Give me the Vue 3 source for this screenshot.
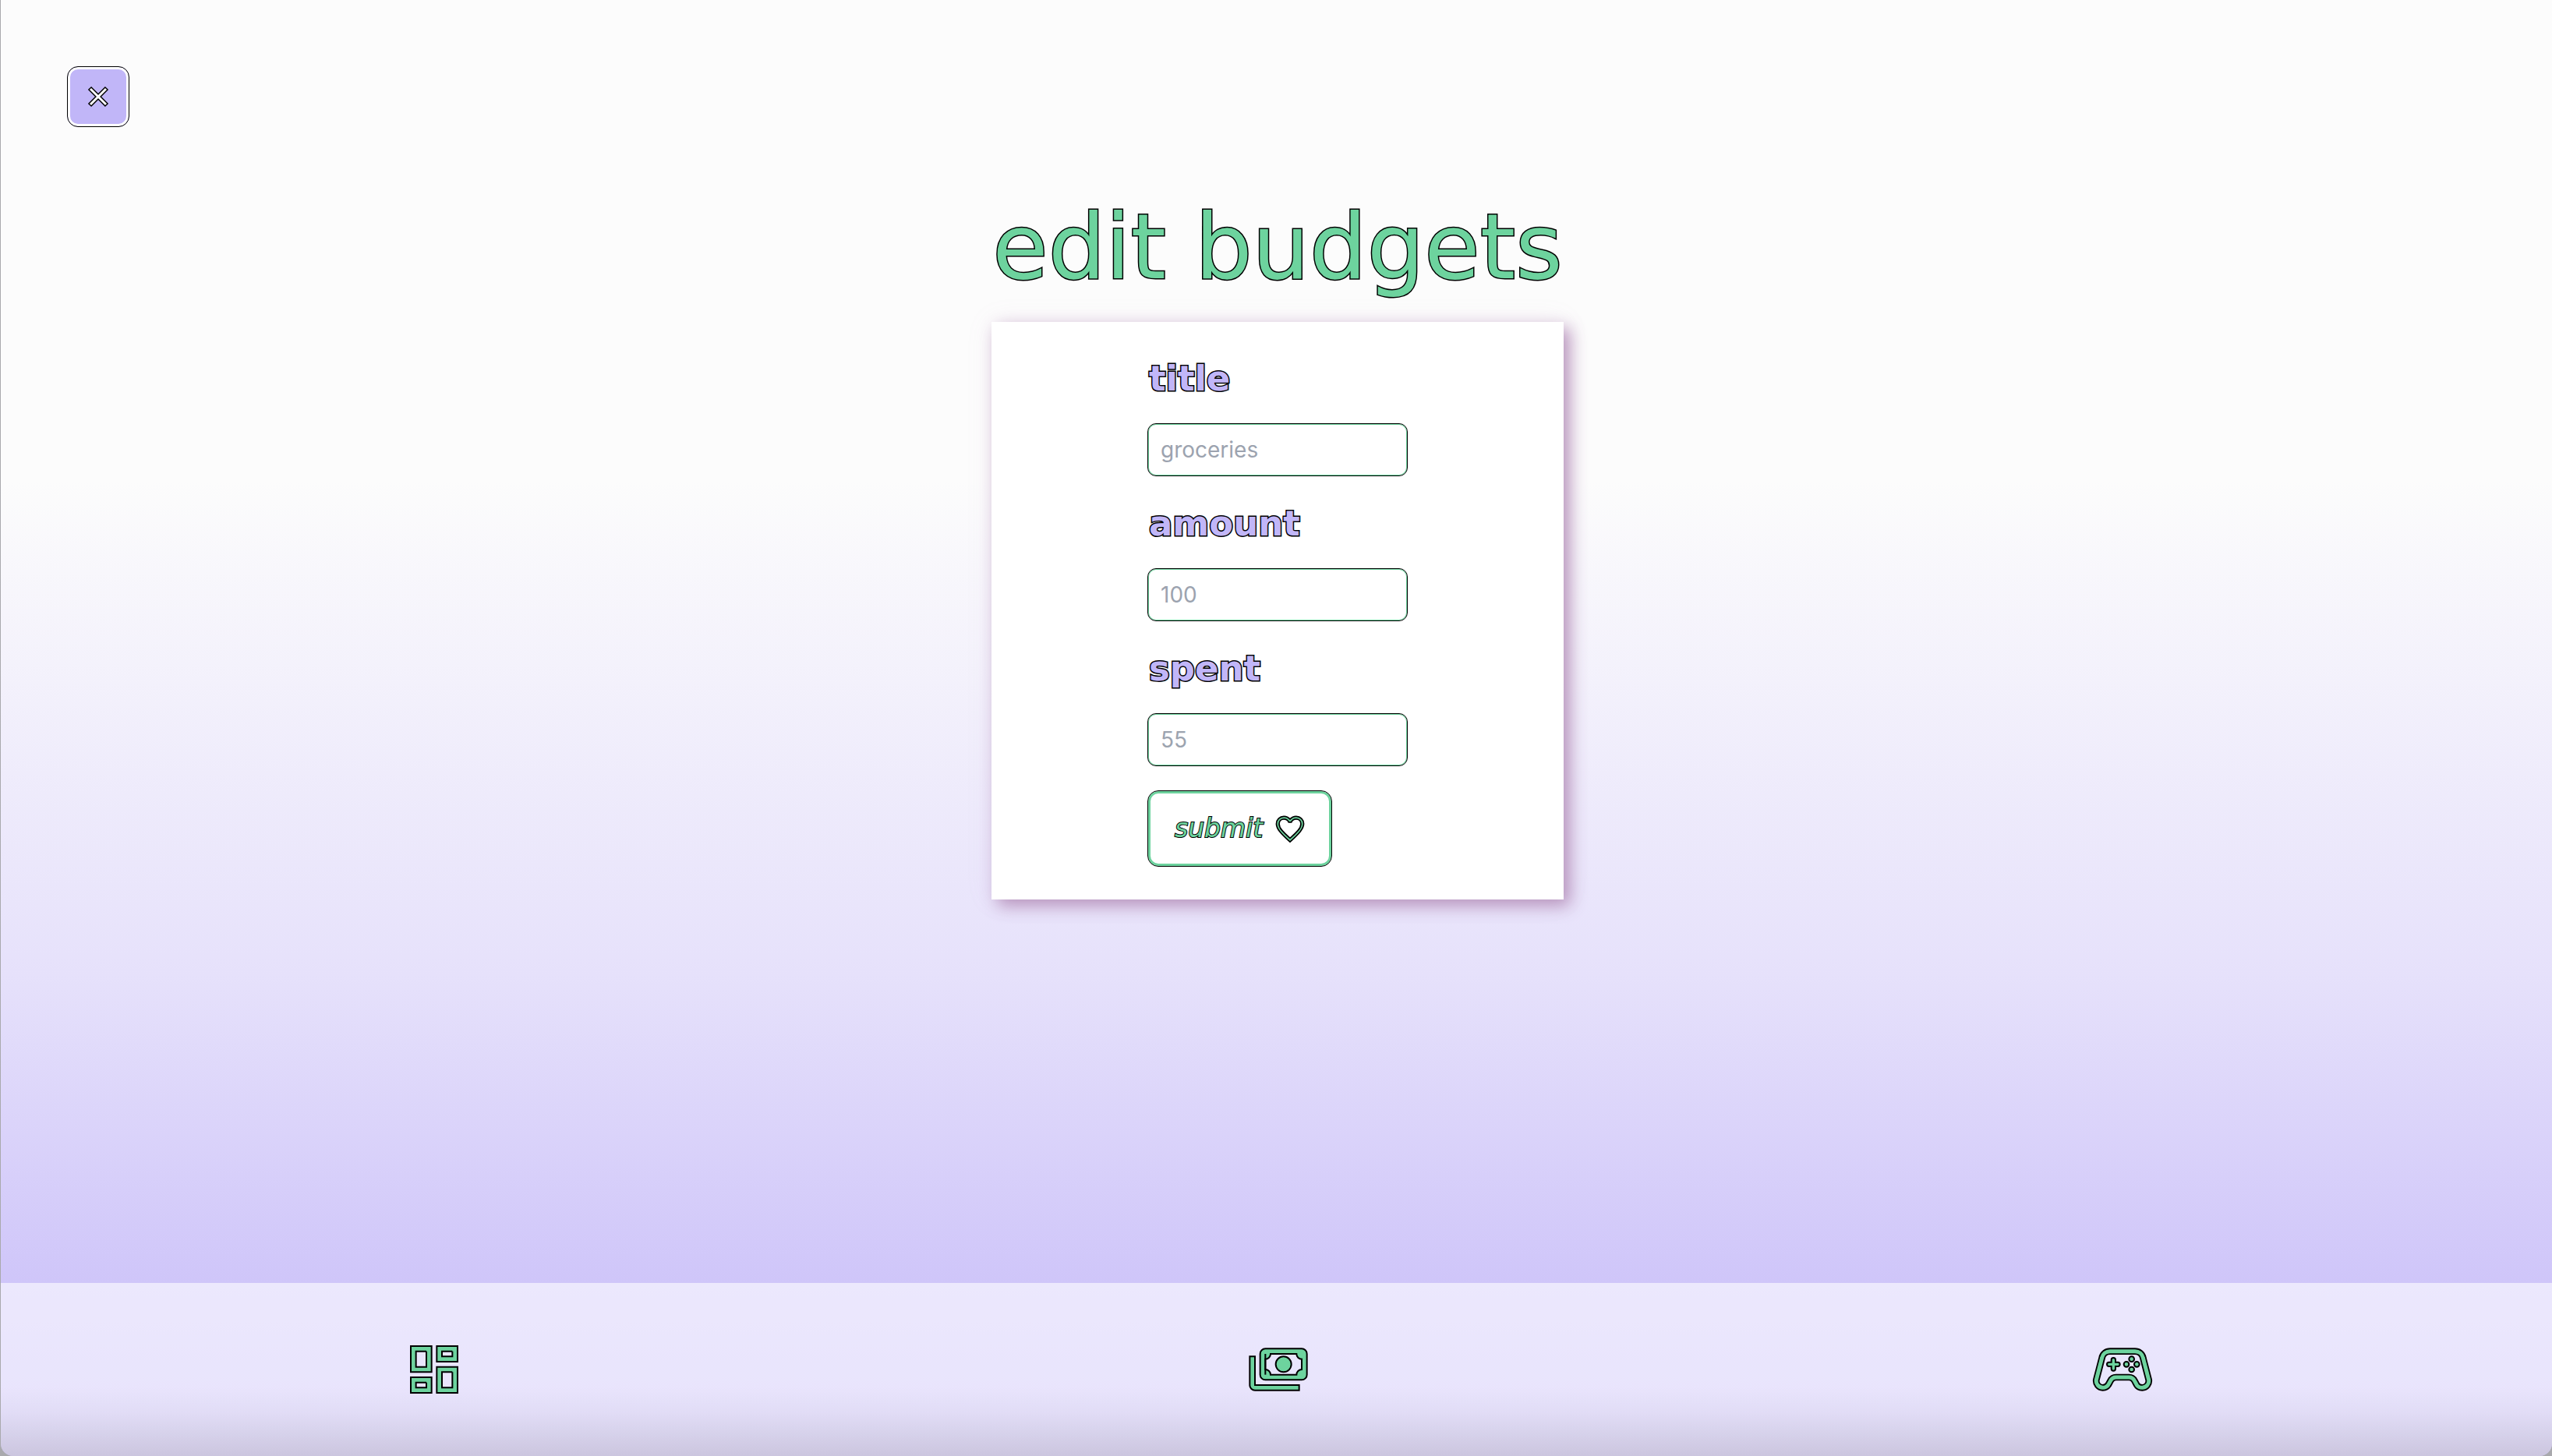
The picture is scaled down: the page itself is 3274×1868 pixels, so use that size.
<script setup>
const fields = [
  { id: 'title', placeholder: 'groceries' },
  { id: 'amount', placeholder: '100' },
  { id: 'spent', placeholder: '55' },
]
</script>

<template>
  <div class="page">
    <header class="top">
      <button type="button" class="close" aria-label="close">
        <svg viewBox="0 0 32 32" aria-hidden="true">
          <path class="x-edge" d="M5 5L27 27M27 5L5 27" />
          <path class="x-core" d="M6 6L26 26M26 6L6 26" />
        </svg>
      </button>
    </header>

    <main class="content">
      <h1>edit budgets</h1>
      <form class="card" @submit.prevent>
        <div class="fields">
          <div v-for="field in fields" :key="field.id" class="field">
            <label :for="field.id">{{ field.id }}</label>
            <input :id="field.id" type="text" :placeholder="field.placeholder" />
          </div>
          <button type="submit" class="submit">
            <span>submit</span>
            <svg viewBox="0 0 24 24" aria-hidden="true">
              <path d="M16.5 3c-1.74 0-3.41.81-4.5 2.09C10.91 3.81 9.24 3 7.5 3 4.42 3 2 5.42 2 8.5c0 3.6 3 6.9 10 13.3 7-6.4 10-9.7 10-13.3C22 5.42 19.58 3 16.5 3zM12 19.1C6.8 14.4 4 11.7 4 8.5 4 6.5 5.5 5 7.5 5c1.54 0 3.04.99 3.57 2.36h1.87C13.46 5.99 14.96 5 16.5 5c2 0 3.5 1.5 3.5 3.5 0 3.2-2.8 5.9-8 10.6z" />
            </svg>
          </button>
        </div>
      </form>
    </main>

    <nav class="bar">
      <a href="#" aria-label="dashboard">
        <svg viewBox="0 0 24 24">
          <path d="M19 5v2h-4V5h4M9 5v6H5V5h4m10 8v6h-4v-6h4M9 17v2H5v-2h4M21 3h-8v6h8V3zM11 3H3v10h8V3zm10 8h-8v10h8V11zm-10 4H3v6h8v-6z" />
        </svg>
      </a>
      <a href="#" aria-label="budgets">
        <svg viewBox="0 0 24 24">
          <path d="M21 4H7c-1.1 0-2 .9-2 2v8c0 1.1.9 2 2 2h14c1.1 0 2-.9 2-2V6c0-1.1-.9-2-2-2zm0 8c-1.1 0-2 .9-2 2H9c0-1.1-.9-2-2-2V8c1.1 0 2-.9 2-2h10c0 1.1.9 2 2 2v4z" />
          <path d="M7 6v8" />
          <circle cx="14" cy="10" r="3" />
          <path d="M3 7H1v11c0 1.1.9 2 2 2h17v-2H3z" />
        </svg>
      </a>
      <a href="#" aria-label="games">
        <svg viewBox="0 0 24 24">
          <path class="pad-edge" d="M7.2 5h9.6c1.5 0 2.8 1 3.1 2.5L22.1 16a2.6 2.6 0 0 1-2.5 3c-1 0-1.9-.5-2.3-1.4l-.7-1.3c-.4-.8-1.2-1.3-2.1-1.3h-5c-.9 0-1.7.5-2.1 1.3l-.7 1.3A2.6 2.6 0 0 1 4.4 19a2.6 2.6 0 0 1-2.5-3L4.1 7.5C4.4 6 5.7 5 7.2 5z" />
          <path class="pad-core" d="M7.2 5h9.6c1.5 0 2.8 1 3.1 2.5L22.1 16a2.6 2.6 0 0 1-2.5 3c-1 0-1.9-.5-2.3-1.4l-.7-1.3c-.4-.8-1.2-1.3-2.1-1.3h-5c-.9 0-1.7.5-2.1 1.3l-.7 1.3A2.6 2.6 0 0 1 4.4 19a2.6 2.6 0 0 1-2.5-3L4.1 7.5C4.4 6 5.7 5 7.2 5z" />
          <path d="M8.5 7.5a.8.8 0 0 1 .8.8v.9h.9a.8.8 0 0 1 0 1.6h-.9v.9a.8.8 0 0 1-1.6 0v-.9h-.9a.8.8 0 0 1 0-1.6h.9v-.9a.8.8 0 0 1 .8-.8z" />
          <circle cx="15.5" cy="8" r="1" />
          <circle cx="13.5" cy="10" r="1" />
          <circle cx="17.5" cy="10" r="1" />
          <circle cx="15.5" cy="12" r="1" />
        </svg>
      </a>
    </nav>
  </div>
</template>

<style>
body {
  margin: 0;
  background: #a9a9ad;
}
</style>

<style scoped>
.page {
  box-sizing: border-box;
  min-height: 100vh;
  display: flex;
  flex-direction: column;
  margin-left: 1px;
  border-radius: 0 0 16px 16px;
  overflow: hidden;
  background: linear-gradient(#fcfcfc 0%, #fcfcfc 33%, #e6e1fb 67%, #c2b6f8 100%);
}

.top {
  padding: 85px 85px 0;
}

.close {
  box-sizing: border-box;
  display: flex;
  align-items: center;
  justify-content: center;
  width: 80px;
  height: 78px;
  padding: 0;
  border: 1px solid #000;
  border-radius: 14px;
  background: #c1b6f8;
  box-shadow: inset 0 0 0 3px #fff;
}

.close svg {
  width: 32px;
  height: 32px;
}

.x-edge {
  stroke: #000;
  stroke-width: 6;
}

.x-core {
  stroke: #fff;
  stroke-width: 3;
}

.content {
  flex: 1;
  display: flex;
  flex-direction: column;
  align-items: center;
  padding-left: 3px;
}

h1 {
  margin: 74px 0 16px;
  font: 400 116px/160px "DejaVu Sans", sans-serif;
  color: #6dd39e;
  -webkit-text-stroke: 3px #000;
  paint-order: stroke fill;
}

.card {
  box-sizing: border-box;
  display: flex;
  justify-content: center;
  width: 734px;
  padding: 43px 0 42px;
  background: #fff;
  box-shadow: 8px 8px 20px #b894bd, 0 0 32px rgba(184, 148, 189, 0.1);
}

.fields {
  display: flex;
  flex-direction: column;
  align-items: flex-start;
  width: 334px;
}

.field {
  display: flex;
  flex-direction: column;
  gap: 27px;
  margin-bottom: 31px;
}

label {
  padding-left: 2px;
  font: 700 45px/60px "DejaVu Sans", sans-serif;
  color: #c1b6f8;
  -webkit-text-stroke: 3px #000;
  paint-order: stroke fill;
}

input {
  box-sizing: border-box;
  width: 334px;
  height: 68px;
  padding: 0 16px;
  border: 1px solid #000;
  border-radius: 11px;
  background: #fff;
  box-shadow: inset 0 0 0 1px #6dd39e;
  font: 28px/40px Inter, sans-serif;
}

input::placeholder {
  color: #9ca3af;
  opacity: 1;
}

.submit {
  box-sizing: border-box;
  display: flex;
  align-items: center;
  gap: 14px;
  height: 98px;
  padding: 0 32px 0 34px;
  border: 1px solid #000;
  border-radius: 14px;
  background: #fff;
  box-shadow: inset 0 0 0 3px #6dd39e;
  font: italic 400 33px/40px "DejaVu Sans", sans-serif;
  color: #6dd39e;
}

.submit span {
  -webkit-text-stroke: 2px #000;
  paint-order: stroke fill;
}

.submit svg {
  width: 42px;
  height: 42px;
}

.submit path {
  fill: #6dd39e;
  stroke: #000;
  stroke-width: 1;
}

.bar {
  display: flex;
  justify-content: space-around;
  padding: 71px 10px 71px 14px;
  background:
    linear-gradient(transparent 60%, rgba(60, 50, 90, 0.04) 75%, rgba(60, 50, 70, 0.16) 100%),
    rgba(255, 255, 255, 0.6);
}

.bar a {
  display: block;
  height: 80px;
}

.bar svg {
  display: block;
  width: 80px;
  height: 80px;
  fill: #6dd39e;
  stroke: #000;
  stroke-width: 0.6;
}

.bar .pad-edge {
  fill: none;
  stroke-width: 2.6;
}

.bar .pad-core {
  fill: none;
  stroke: #6dd39e;
  stroke-width: 1.5;
}
</style>
